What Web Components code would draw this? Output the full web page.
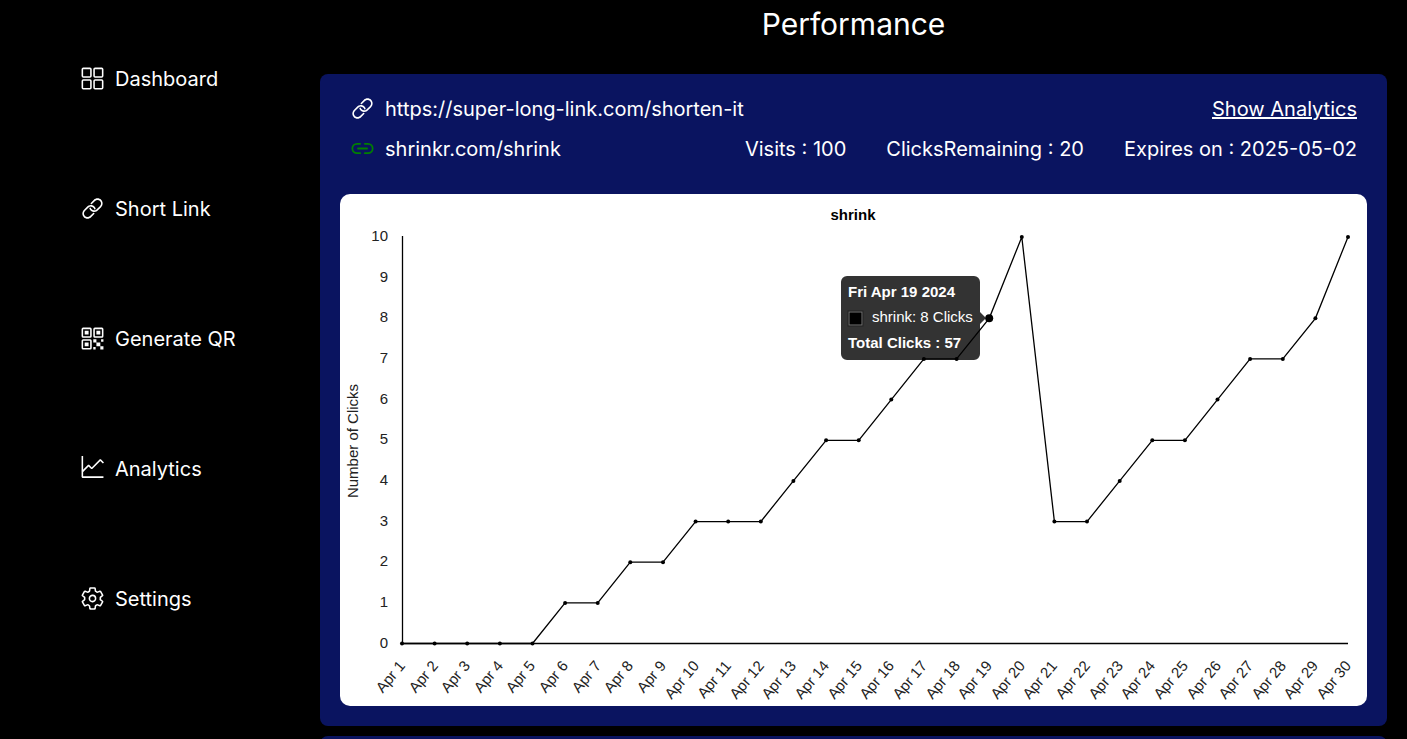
<!DOCTYPE html>
<html lang="en">
<head>
<meta charset="utf-8">
<title>Performance</title>
<style>
  html, body { margin: 0; height: 100%; background: #000; color: #fff; }
  body { font: 400 20px/30px Inter, sans-serif; overflow: hidden; }
</style>
</head>
<body>
<app-shell>
  <side-nav slot="nav">
    <nav-item icon="grid" href="#dashboard">Dashboard</nav-item>
    <nav-item icon="link" href="#short-link">Short Link</nav-item>
    <nav-item icon="qr" href="#qr">Generate QR</nav-item>
    <nav-item icon="graph" href="#analytics">Analytics</nav-item>
    <nav-item icon="gear" href="#settings">Settings</nav-item>
  </side-nav>
  <page-title>Performance</page-title>
  <link-card>
    <span slot="url">https://super-long-link.com/shorten-it</span>
    <span slot="short">shrinkr.com/shrink</span>
    <span slot="stats">Visits : 100</span>
    <span slot="stats">ClicksRemaining : 20</span>
    <span slot="stats">Expires on : 2025-05-02</span>
    <clicks-chart name="shrink" active="18" day="Fri Apr 19 2024" total="57"
      values="0,0,0,0,0,1,1,2,2,3,3,3,4,5,5,6,7,7,8,10,3,3,4,5,5,6,7,7,8,10"></clicks-chart>
  </link-card>
  <link-card></link-card>
</app-shell>

<script>
const ICONS = {
  grid: `<g fill="none" stroke="currentColor" stroke-width="32" stroke-linejoin="round">
    <rect x="48" y="48" width="176" height="176" rx="20"/><rect x="288" y="48" width="176" height="176" rx="20"/>
    <rect x="48" y="288" width="176" height="176" rx="20"/><rect x="288" y="288" width="176" height="176" rx="20"/></g>`,
  link: `<path d="M280 341.1l-1.2.1c-3.6.4-7 2-9.6 4.5l-64.6 64.6c-13.7 13.7-32 21.2-51.5 21.2s-37.8-7.5-51.5-21.2c-13.7-13.7-21.2-32-21.2-51.5s7.5-37.8 21.2-51.5l68.6-68.6c3.5-3.5 7.3-6.6 11.4-9.3 4.6-3 9.6-5.6 14.8-7.5 4.8-1.8 9.9-3 15-3.7 3.4-.5 6.9-.7 10.2-.7 1.4 0 2.8.1 4.6.2 17.7 1.1 34.4 8.6 46.8 21 7.7 7.7 13.6 17.1 17.1 27.3 2.8 8 11.2 12.5 19.3 10.1.1 0 .2-.1.3-.1.1 0 .2 0 .2-.1 8.1-2.5 12.8-11 10.5-19.1-4.4-15.6-12.2-28.7-24.6-41-15.6-15.6-35.9-25.8-57.6-29.3-1.9-.3-3.8-.6-5.7-.8-3.7-.4-7.4-.6-11.1-.6-2.6 0-5.2.1-7.7.3-5.4.4-10.8 1.2-16.2 2.5-1.1.2-2.1.5-3.2.8-6.7 1.8-13.3 4.2-19.5 7.3-10.3 5.1-19.6 11.7-27.7 19.9l-68.6 68.6C58.9 304.4 48 330.8 48 359c0 28.2 10.9 54.6 30.7 74.4C98.5 453.1 124.9 464 153 464c28.2 0 54.6-10.9 74.4-30.7l65.3-65.3c10.4-10.5 2-28.3-12.7-26.9z"/>
    <path d="M433.3 78.7C413.5 58.9 387.1 48 359 48s-54.6 10.9-74.4 30.7l-63.7 63.7c-9.7 9.7-3.6 26.3 10.1 27.4 4.7.4 9.3-1.3 12.7-4.6l63.8-63.6c13.7-13.7 32-21.2 51.5-21.2s37.8 7.5 51.5 21.2c13.7 13.7 21.2 32 21.2 51.5s-7.5 37.8-21.2 51.5l-68.6 68.6c-3.5 3.5-7.3 6.6-11.4 9.3-4.6 3-9.6 5.6-14.8 7.5-4.8 1.8-9.9 3-15 3.7-3.4.5-6.9.7-10.2.7-1.4 0-2.9-.1-4.6-.2-17.7-1.1-34.4-8.6-46.8-21-7.3-7.3-12.8-16-16.4-25.5-2.9-7.7-11.1-11.9-19.1-9.8-8.9 2.3-14.1 11.7-11.3 20.5 4.5 14 12.1 25.9 23.7 37.5l.2.2c16.9 16.9 39.4 27.6 63.3 30.1 3.7.4 7.4.6 11.1.6 2.6 0 5.2-.1 7.8-.3 6.5-.5 13-1.6 19.3-3.2 6.3-1.6 12.4-3.9 18.3-6.7 10.3-5.1 19.6-11.7 27.7-19.9l68.6-68.6c19.8-19.8 30.7-46.2 30.7-74.4s-11.1-54.6-30.9-74.4z"/>`,
  qr: `<path d="M336 336h80v80h-80zM272 272h64v64h-64zM416 416h64v64h-64zM432 272h48v48h-48zM272 432h48v48h-48zM336 96h80v80h-80zM96 96h80v80H96zM96 336h80v80H96z"/>
    <g fill="none" stroke="currentColor" stroke-width="32" stroke-linejoin="round">
    <rect x="288" y="48" width="176" height="176" rx="16"/><rect x="48" y="48" width="176" height="176" rx="16"/>
    <rect x="48" y="288" width="176" height="176" rx="16"/></g>`,
  graph: `<g transform="scale(32)"><path d="M15 13v1H1.5l-.5-.5V0h1v13h13z"/>
    <path d="M13 3.207L7.854 8.354h-.708L5.5 6.707l-3.646 3.647-.708-.708 4-4h.708L7.5 7.293l5.146-5.147h.707l2 2-.707.707L13 3.207z"/></g>`,
  gear: `<path fill="none" stroke="currentColor" stroke-width="32" stroke-linecap="round" stroke-linejoin="round" d="M262.29 192.31a64 64 0 1057.4 57.4 64.13 64.13 0 00-57.4-57.4zM416.39 256a154.34 154.34 0 01-1.53 20.79l45.21 35.46a10.81 10.81 0 012.45 13.75l-42.77 74a10.81 10.81 0 01-13.14 4.59l-44.9-18.08a16.11 16.11 0 00-15.17 1.75A164.48 164.48 0 01325 400.8a15.94 15.94 0 00-8.82 12.14l-6.73 47.89a11.08 11.08 0 01-10.68 9.17h-85.54a11.11 11.11 0 01-10.69-8.87l-6.72-47.82a16.07 16.07 0 00-9-12.22 155.3 155.3 0 01-21.46-12.57 16 16 0 00-15.11-1.71l-44.89 18.07a10.81 10.81 0 01-13.14-4.58l-42.77-74a10.8 10.8 0 012.45-13.75l38.21-30a16.05 16.05 0 006-14.08c-.36-4.17-.58-8.33-.58-12.5s.21-8.27.58-12.35a16 16 0 00-6.07-13.94l-38.19-30A10.81 10.81 0 0149.48 186l42.77-74a10.81 10.81 0 0113.14-4.59l44.9 18.08a16.11 16.11 0 0015.17-1.75A164.48 164.48 0 01187 111.2a15.94 15.94 0 008.82-12.14l6.73-47.89A11.08 11.08 0 01213.23 42h85.54a11.11 11.11 0 0110.69 8.87l6.72 47.82a16.07 16.07 0 009 12.22 155.3 155.3 0 0121.46 12.57 16 16 0 0015.11 1.71l44.89-18.07a10.81 10.81 0 0113.14 4.58l42.77 74a10.8 10.8 0 01-2.45 13.75l-38.21 30a16.05 16.05 0 00-6.05 14.08c.33 4.14.55 8.3.55 12.47z"/>`,
  chain: `<g fill="none" stroke="currentColor" stroke-width="36" stroke-linecap="round" stroke-linejoin="round">
    <path d="M208 352h-64a96 96 0 010-192h64M304 160h64a96 96 0 010 192h-64M163.29 256h187.42"/></g>`
};

class BaseElement extends HTMLElement {
  constructor() { super(); this.attachShadow({ mode: 'open' }); }
  connectedCallback() { this.shadowRoot.innerHTML = this.render(); }
}

customElements.define('ui-icon', class extends BaseElement {
  render() {
    return `<style>:host{display:block;flex:none;width:25px;padding-bottom:1px}svg{display:block;width:25px;height:25px}</style>
      <svg viewBox="0 0 512 512" fill="currentColor" aria-hidden="true">${ICONS[this.getAttribute('name')]}</svg>`;
  }
});

customElements.define('app-shell', class extends BaseElement {
  render() {
    return `<style>
      :host{display:grid;grid-template-columns:300px minmax(0,1fr);height:100vh;overflow:hidden}
      main{display:flex;flex-direction:column;gap:10px;padding:0 20px;overflow:hidden}
      </style><slot name="nav"></slot><main><slot></slot></main>`;
  }
});

customElements.define('side-nav', class extends BaseElement {
  render() {
    return `<style>:host{display:block}
      nav{display:flex;flex-direction:column;gap:100px;padding:64px 0 0 80px}</style><nav><slot></slot></nav>`;
  }
});

customElements.define('nav-item', class extends BaseElement {
  render() {
    return `<style>:host{display:block}
      a{display:flex;align-items:center;gap:10px;color:inherit;text-decoration:none}</style>
      <a href="${this.getAttribute('href')}"><ui-icon name="${this.getAttribute('icon')}"></ui-icon><slot></slot></a>`;
  }
});

customElements.define('page-title', class extends BaseElement {
  render() {
    return `<style>:host{display:block;flex:none;padding-bottom:16px}
      h1{margin:0;font-size:30px;line-height:48px;font-weight:400;text-align:center}</style><h1><slot></slot></h1>`;
  }
});

customElements.define('link-card', class extends BaseElement {
  render() {
    const head = `
      <div class="head">
        <div class="row"><div class="link"><ui-icon name="link"></ui-icon><slot name="url"></slot></div>
          <a href="#analytics">Show Analytics</a></div>
        <div class="row"><div class="link short"><ui-icon name="chain"></ui-icon><slot name="short"></slot></div>
          <div class="stats"><slot name="stats"></slot></div></div>
      </div>`;
    return `<style>
      :host{display:block;flex:none;box-sizing:border-box;min-height:110px;padding:20px;border-radius:8px;background:#0a1460}
      .head{display:grid;gap:10px;padding:0 10px 30px}
      .row,.link,.stats{display:flex;align-items:center}
      .row{justify-content:space-between;min-height:30px}
      .link{gap:10px}
      .stats{gap:40px}
      .short ui-icon{color:green}
      a{color:inherit}
      </style>${this.childElementCount ? head : ''}<slot></slot>`;
  }
});

customElements.define('clicks-chart', class extends BaseElement {
  render() {
    const values = this.getAttribute('values').split(',').map(Number);
    const name = this.getAttribute('name');
    const active = Number(this.getAttribute('active'));
    const left = 62, right = 1008, top = 43, bottom = 449.5;
    const x = i => left + i * (right - left) / (values.length - 1);
    const y = v => bottom - v * (bottom - top) / 10;
    const points = values.map((v, i) => [x(i).toFixed(1), y(v).toFixed(1)]);
    const yLabels = Array.from({ length: 11 }, (_, v) =>
      `<text x="48" y="${Math.round(y(v)) + 4}" text-anchor="end">${v}</text>`).join('');
    const xLabels = values.map((_, i) =>
      `<text transform="translate(${Math.round(x(i))} 469) rotate(-50)" y="5" text-anchor="end">Apr ${i + 1}</text>`).join('');
    const dots = points.map(([cx, cy], i) =>
      `<circle cx="${cx}" cy="${cy}" r="${i === active ? 4 : 2}"/>`).join('');
    return `<style>
      :host{display:block;background:#fff;border-radius:10px;overflow:hidden}
      svg{display:block;width:100%;height:auto;font:15px "Liberation Sans",Arial,sans-serif}
      .labels{fill:#222}
      .bold{font-weight:700}
      .line{fill:none;stroke:#000;stroke-width:1.3}
      .tip{fill:#fff}
      </style>
      <svg viewBox="0 0 1027 512" role="img" aria-label="Number of clicks per day">
        <text class="bold" x="513" y="26" text-anchor="middle">${name}</text>
        <g class="labels">${yLabels}${xLabels}
          <text transform="translate(18 247) rotate(-90)" text-anchor="middle">Number of Clicks</text></g>
        <path class="line" d="M62.5 42v407.5H1008"/>
        <polyline class="line" points="${points.join(' ')}"/>
        ${dots}
        <path fill="rgba(0,0,0,.8)" d="M507 82H634a6 6 0 0 1 6 6V118l6 6-6 6V160a6 6 0 0 1-6 6H507a6 6 0 0 1-6-6V88a6 6 0 0 1 6-6z"/>
        <rect x="508" y="117" width="15" height="15" fill="#000" stroke="#222"/>
        <rect x="509" y="118" width="13" height="13" fill="#000" stroke="#777"/>
        <g class="tip">
          <text class="bold" x="508" y="103">${this.getAttribute('day')}</text>
          <text x="532" y="128">${name}: ${values[active]} Clicks</text>
          <text class="bold" x="508" y="154">Total Clicks : ${this.getAttribute('total')}</text>
        </g>
      </svg>`;
  }
});
</script>
</body>
</html>
